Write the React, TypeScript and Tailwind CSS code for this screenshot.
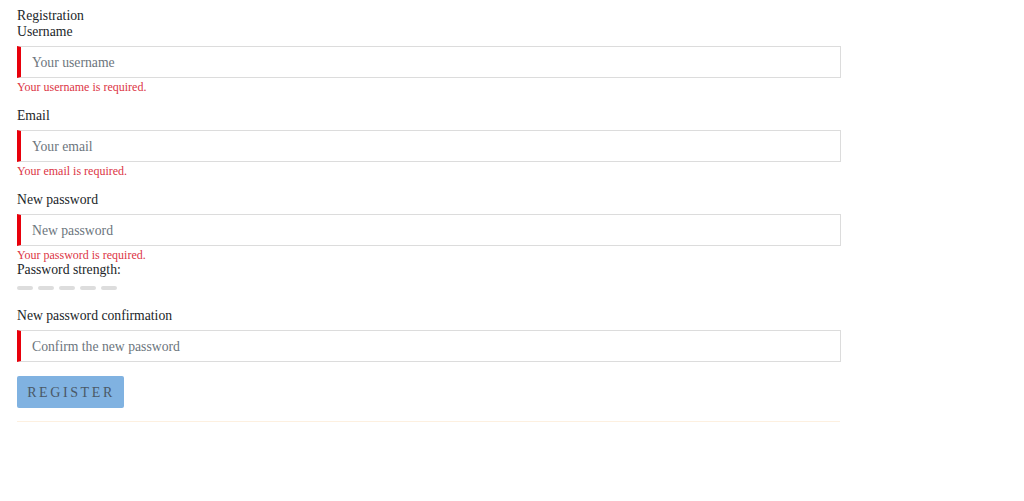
import React from "react";

function Field({ label, placeholder, error, type = "text" }: { label: string; placeholder: string; error?: string; type?: string }) {
  return (
    <div className="flex flex-col">
      <label className="text-[13.7px] leading-[16px] text-[#212529]">{label}</label>
      <input
        type={type}
        placeholder={placeholder}
        className="mt-[6px] h-[32px] w-[824px] border border-[#dcdcdc] border-l-[4px] border-l-[#e8000b] pl-[11px] pt-[2px] text-[13.7px] text-[#495057] placeholder:text-[#6c757d] outline-none bg-white"
        style={{ fontFamily: '"Liberation Serif", serif' }}
      />
      {error && <div className="mt-[2px] text-[12px] leading-[14px] text-[#dc3545]">{error}</div>}
    </div>
  );
}

export default function App() {
  return (
    <div className="bg-white min-h-[501px] w-[1024px] pl-[17px] pt-[8px] text-[#212529]" style={{ fontFamily: '"Liberation Serif", "Times New Roman", serif' }}>
      <div className="text-[13.7px] leading-[16px]">Registration</div>
      <Field label="Username" placeholder="Your username" error="Your username is required." />
      <div className="mt-[14px]">
        <Field label="Email" placeholder="Your email" error="Your email is required." />
      </div>
      <div className="mt-[14px]">
        <Field label="New password" type="password" placeholder="New password" error="Your password is required." />
      </div>
      <div className="text-[13.7px] leading-[16px]">Password strength:</div>
      <div className="flex gap-[5px] mt-[8px]">
        {[0, 1, 2, 3, 4].map((i) => (
          <div key={i} className="w-[16px] h-[4px] rounded-[2px] bg-[#dddddd]" />
        ))}
      </div>
      <div className="mt-[18px]">
        <Field label="New password confirmation" type="password" placeholder="Confirm the new password" />
      </div>
      <button
        className="mt-[14px] h-[32px] w-[107px] rounded-[2px] bg-[#80b2e1] text-[14px] tracking-[2.6px] text-[#4a5866] pl-[1px]"
        style={{ fontFamily: '"Liberation Serif", serif' }}
      >
        REGISTER
      </button>
      <div className="mt-[13px] w-[823px] h-px bg-[#fdf0e0]" />
    </div>
  );
}
